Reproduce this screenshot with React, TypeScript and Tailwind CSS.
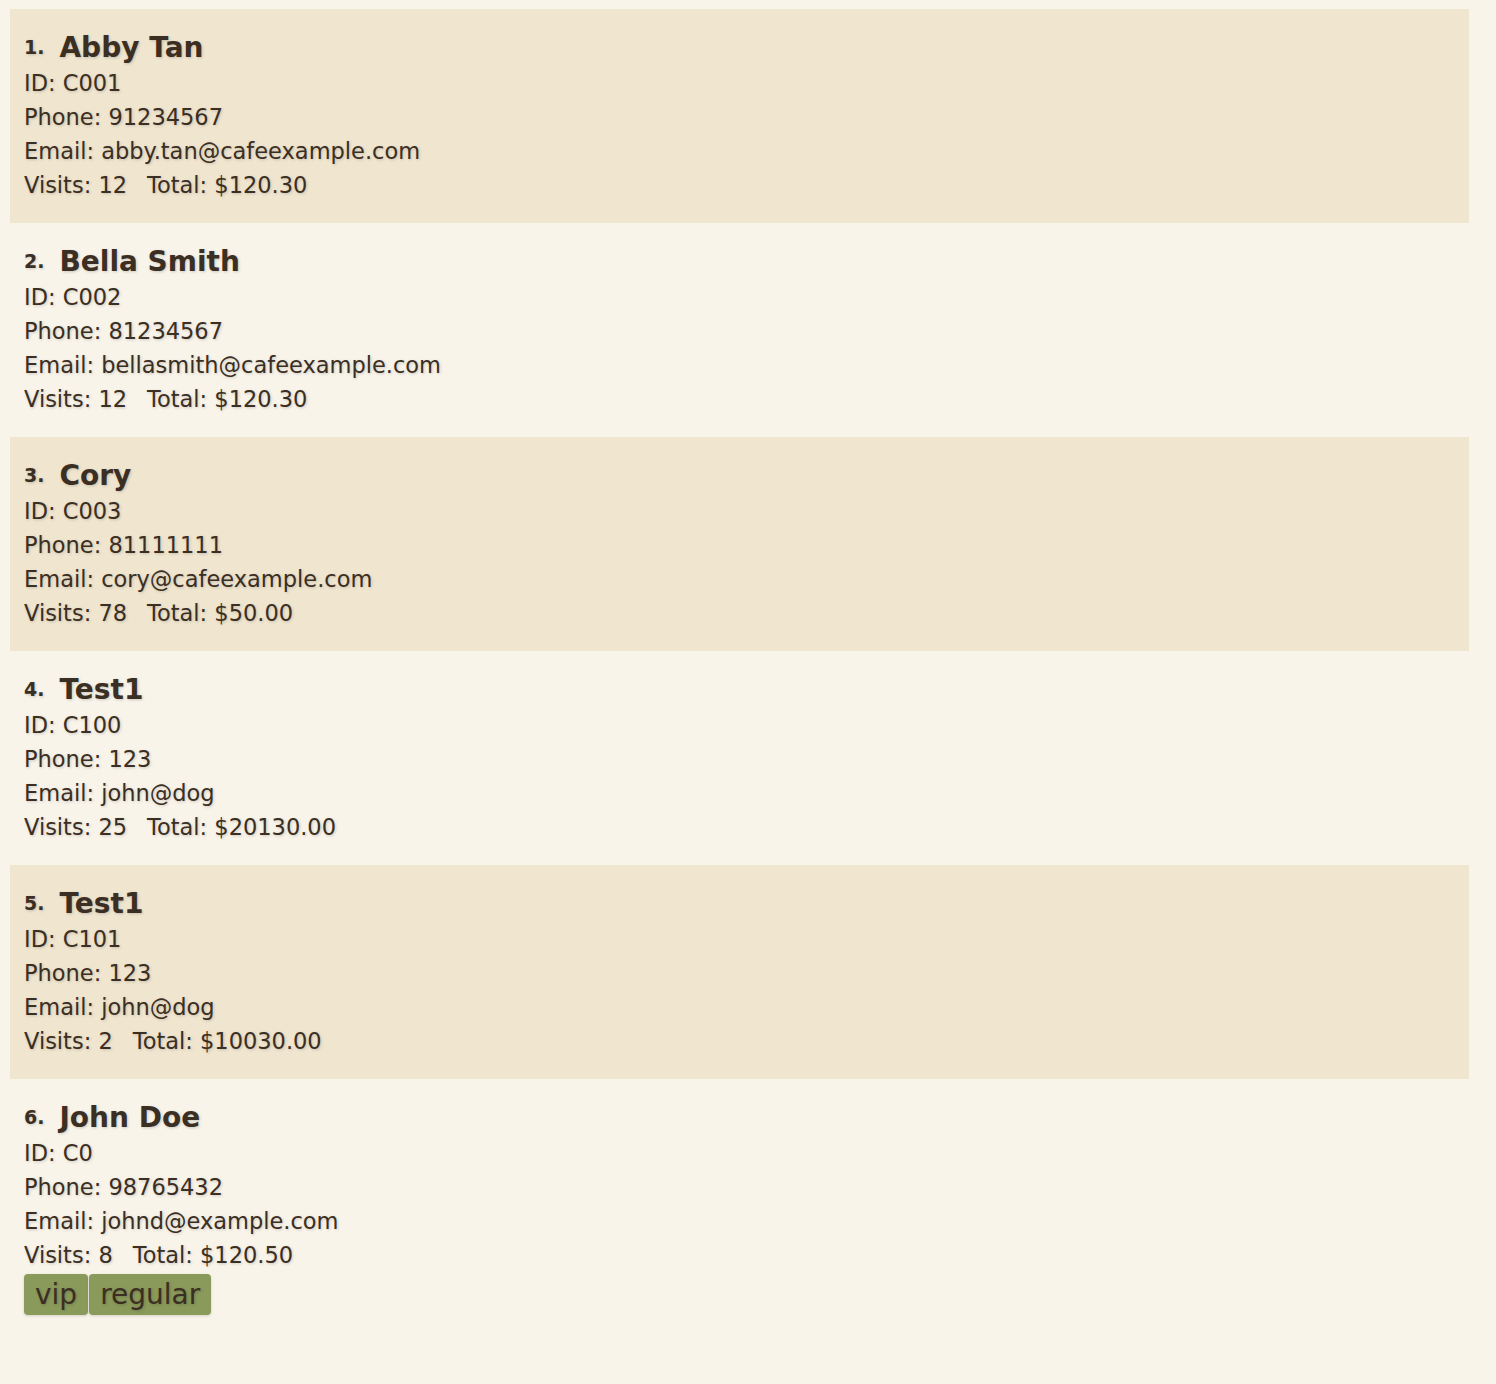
import React from "react";

type Customer = {
  name: string;
  id: string;
  phone: string;
  email: string;
  visits: number;
  total: string;
  tags?: string[];
};

const customers: Customer[] = [
  { name: "Abby Tan", id: "C001", phone: "91234567", email: "abby.tan@cafeexample.com", visits: 12, total: "$120.30" },
  { name: "Bella Smith", id: "C002", phone: "81234567", email: "bellasmith@cafeexample.com", visits: 12, total: "$120.30" },
  { name: "Cory", id: "C003", phone: "81111111", email: "cory@cafeexample.com", visits: 78, total: "$50.00" },
  { name: "Test1", id: "C100", phone: "123", email: "john@dog", visits: 25, total: "$20130.00" },
  { name: "Test1", id: "C101", phone: "123", email: "john@dog", visits: 2, total: "$10030.00" },
  { name: "John Doe", id: "C0", phone: "98765432", email: "johnd@example.com", visits: 8, total: "$120.50", tags: ["vip", "regular"] },
];

function CustomerCard({ c, index }: { c: Customer; index: number }) {
  const striped = index % 2 === 0;
  return (
    <div className={`px-[14px] pt-[20px] pb-[21px] ${striped ? "bg-[#f0e6d0]" : "bg-transparent"}`}>
      <div className="flex items-center gap-[15px] h-[37px]">
        <span className="text-[19px] font-bold">{index + 1}.</span>
        <span className="text-[28px] font-bold">{c.name}</span>
      </div>
      <div className="text-[22.5px] leading-[34px]">
        <div>ID: {c.id}</div>
        <div>Phone: {c.phone}</div>
        <div>Email: {c.email}</div>
        <div className="flex gap-[20px]">
          <span>Visits: {c.visits}</span>
          <span>Total: {c.total}</span>
        </div>
      </div>
      {c.tags && (
        <div className="flex gap-[1px] mt-[2px]">
          {c.tags.map((t) => (
            <span key={t} className="rounded-[4px] bg-[#8a9a5b] px-[11px] text-[28px] leading-[41px] shadow-[0_1px_3px_rgba(0,0,0,0.15)]">
              {t}
            </span>
          ))}
        </div>
      )}
    </div>
  );
}

export default function App() {
  return (
    <div
      className="min-h-[1384px] bg-[#f8f4ea] pl-[10px] pr-[27px] pt-[9px] text-[#3b2e22] [text-shadow:1px_1px_3px_rgba(0,0,0,0.18)]"
      style={{ fontFamily: "'DejaVu Sans', sans-serif" }}
    >
      {customers.map((c, i) => (
        <CustomerCard key={i} c={c} index={i} />
      ))}
    </div>
  );
}
